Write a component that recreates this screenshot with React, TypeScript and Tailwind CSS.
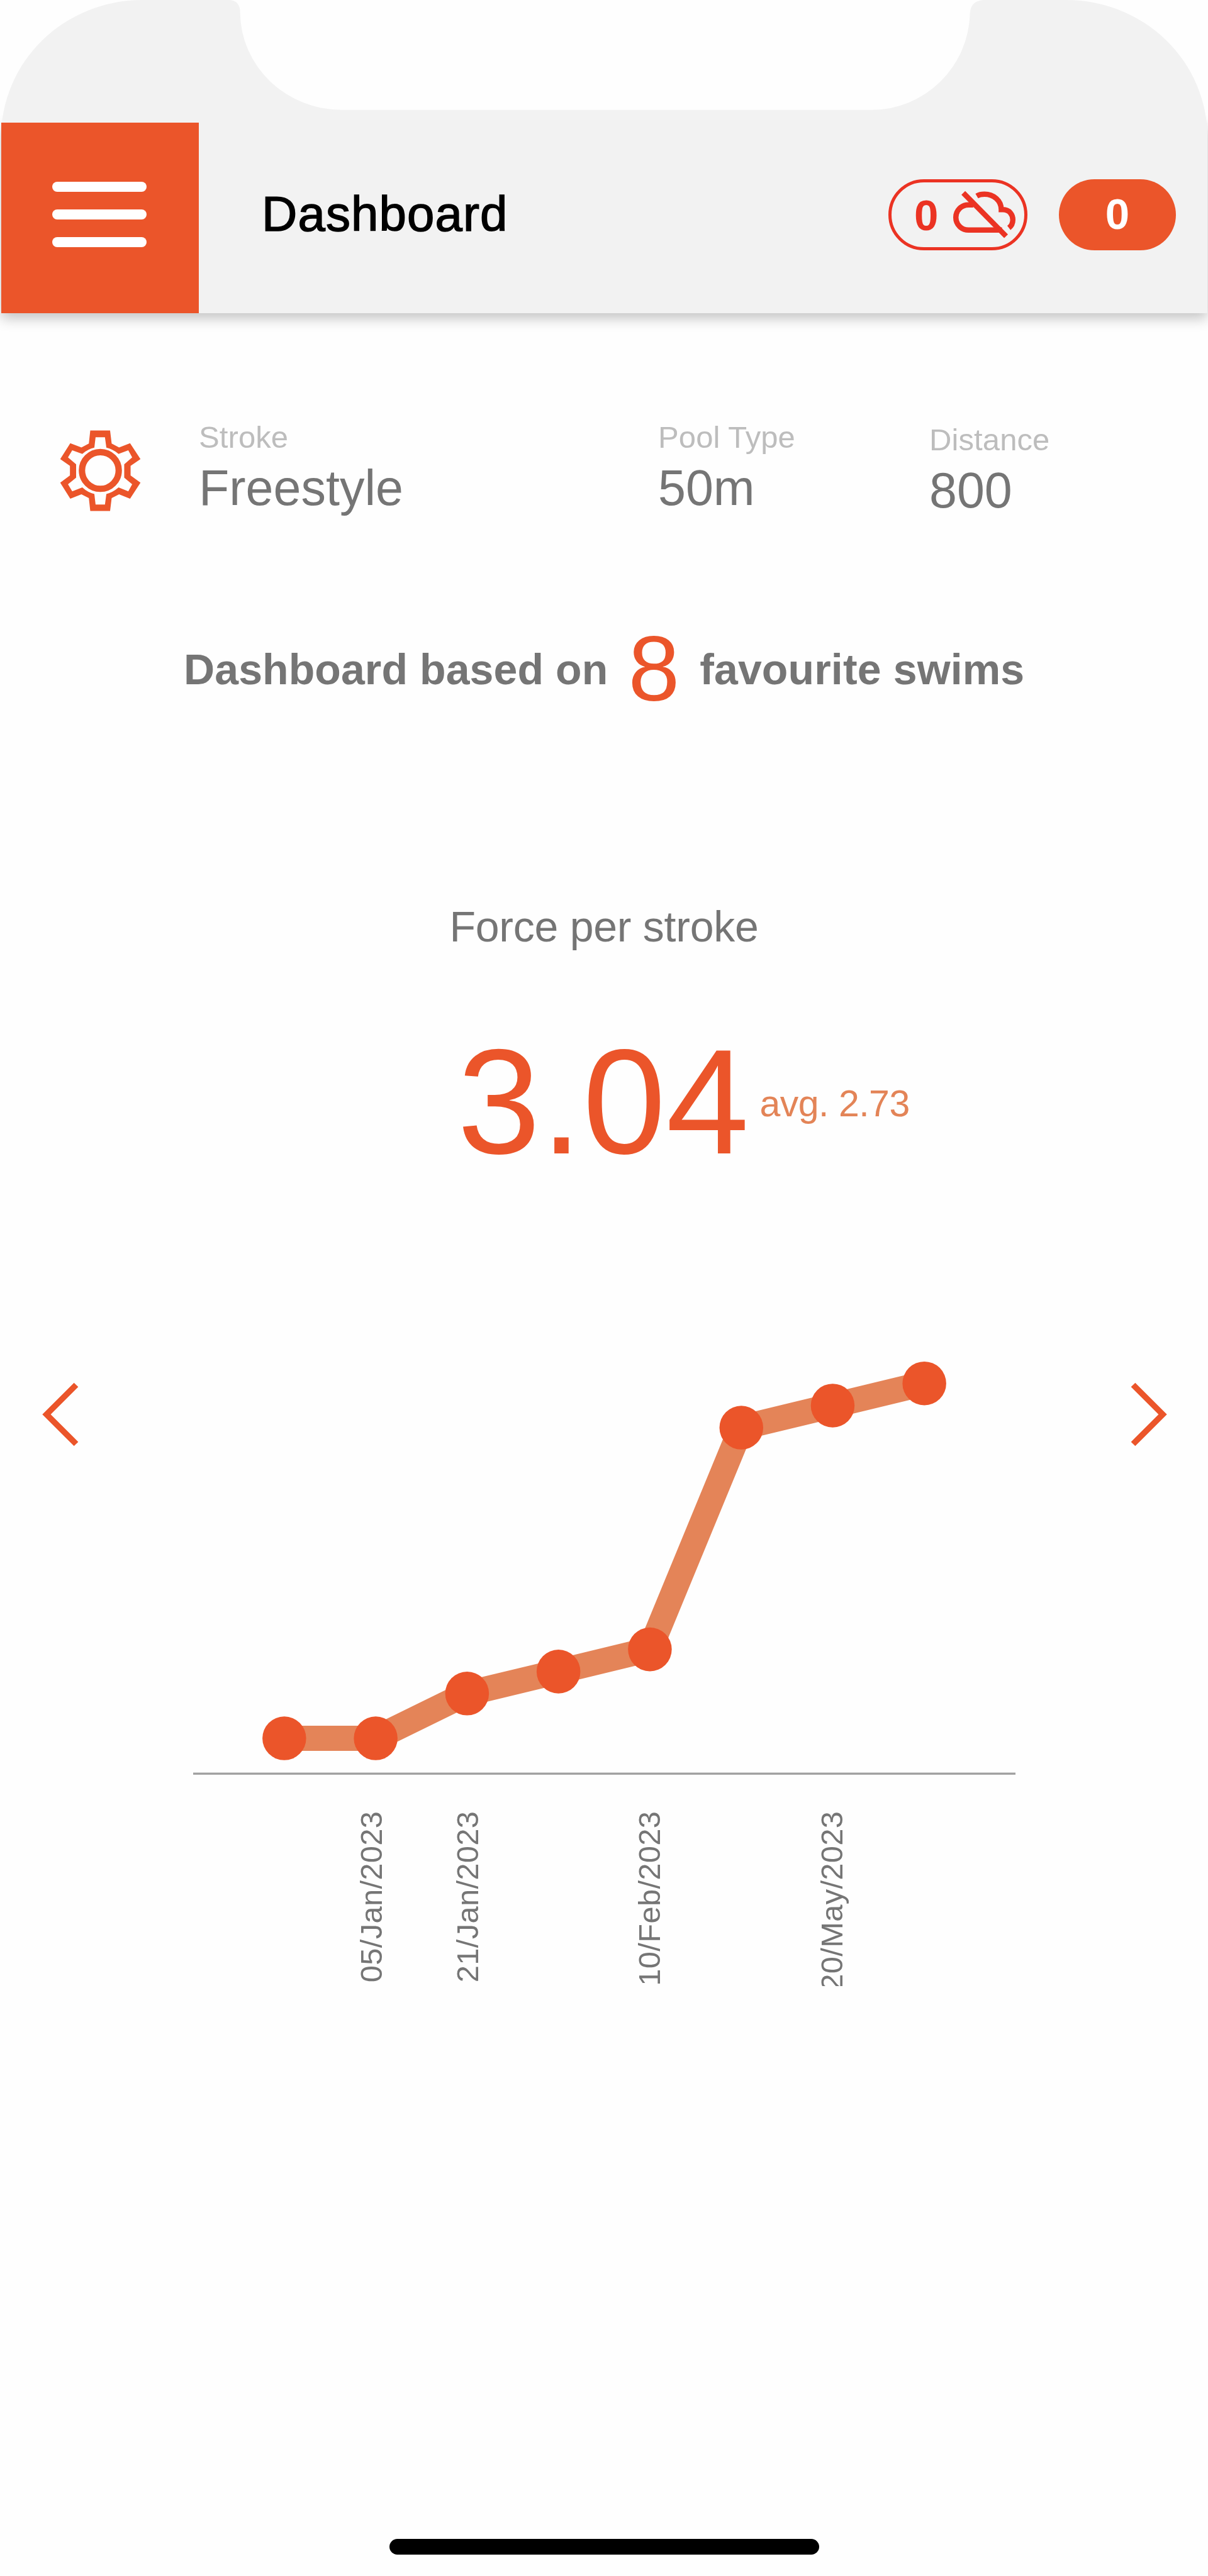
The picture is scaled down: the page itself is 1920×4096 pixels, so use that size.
import React from "react";

type SettingProps = {
  label: string;
  value: string;
  className?: string;
};

type Swim = {
  x: number;
  y: number;
};

type DateLabel = {
  x: number;
  text: string;
};

const swims: Swim[] = [
  { x: 536, y: 3280.6 },
  { x: 708.5, y: 3280.6 },
  { x: 881, y: 3196 },
  { x: 1053.5, y: 3154.6 },
  { x: 1226, y: 3112.7 },
  { x: 1398.6, y: 2694 },
  { x: 1571, y: 2652.4 },
  { x: 1744, y: 2610.5 },
];

const dateLabels: DateLabel[] = [
  { x: 720.5, text: "05/Jan/2023" },
  { x: 901.5, text: "21/Jan/2023" },
  { x: 1244.5, text: "10/Feb/2023" },
  { x: 1590, text: "20/May/2023" },
];

// Phone status area with the notch cut out
const StatusBar = () => (
  <svg viewBox="0 0 2279 232" className="block h-[195px] w-[1920px]" preserveAspectRatio="none">
    <path
      fill="#f2f2f2"
      d="M2 260 A266 260 0 0 1 268 0 H434 Q453 2 453 24 A192 186 0 0 0 645 208 H1644 A186 188 0 0 0 1830 25 Q1831 2 1855 0 H2012 A266 260 0 0 1 2278 260 Z"
    />
  </svg>
);

const CloudOffIcon = () => (
  <svg
    viewBox="410 115 365 280"
    className="h-[79px] w-[103px]"
    fill="none"
    stroke="currentColor"
    strokeWidth={30}
  >
    <path d="M474 132 L715 376" />
    <path d="M530 199 H503 A71 71 0 0 0 503 341 H692" />
    <path d="M550 149 C562 142 580 139 593 139 C645 139 688 175 688 226 H697 C735 226 753 255 753 283 C753 300 745 318 731 329" />
  </svg>
);

const GearIcon = () => (
  <svg viewBox="38 64 458 459" className="h-[129px] w-[129px]">
    <path
      fill="currentColor"
      fillRule="evenodd"
      d="M210 66 H322 L331 140 L373 162 L435 138 L494 228 L438 266 V320 L494 361 L435 452 L373 427 L331 448 L322 521 H210 L202 448 L160 427 L97 452 L40 361 L95 320 V266 L40 228 L97 138 L160 162 L202 140 Z M240 104 L233 163 Q195 172 165 198 L108 178 L84 218 L130 257 V333 L84 370 L108 410 L165 388 Q195 416 233 425 L240 485 H293 L301 425 Q338 416 370 388 L425 410 L447 370 L402 333 V257 L447 218 L425 178 L370 198 Q338 172 301 163 L293 104 Z"
    />
    <circle cx={267} cy={292} r={104} fill="none" stroke="currentColor" strokeWidth={36} />
  </svg>
);

const Header = () => (
  <header className="flex h-[303px] w-[1917px] bg-[#f2f2f2] shadow-[0_8px_20px_rgba(0,0,0,0.24)]">
    <button className="flex w-[314px] flex-col items-center justify-center gap-7 bg-[#eb552a] pr-[3px] pb-[12px]">
      <span className="h-4 w-[150px] rounded-full bg-white" />
      <span className="h-4 w-[150px] rounded-full bg-white" />
      <span className="h-4 w-[150px] rounded-full bg-white" />
    </button>

    <div className="flex flex-1 items-center pr-[50px] pb-[11px] pl-[100px]">
      <h1 className="pb-[3px] text-[78px] leading-none tracking-[1.1px] text-black [-webkit-text-stroke:1.5px_black]">
        Dashboard
      </h1>

      {/* Sync badges */}
      <div className="ml-auto flex gap-[50px] text-[69px] leading-none font-bold">
        <div className="flex h-[113px] w-[221px] items-center gap-[22px] rounded-full border-5 border-[#eb3323] pl-[36px] text-[#eb3323]">
          <span className="pt-[2px]">0</span>
          <CloudOffIcon />
        </div>
        <div className="flex h-[113px] w-[186px] items-center justify-center rounded-full bg-[#eb552a] pb-[1px] text-white">
          0
        </div>
      </div>
    </div>
  </header>
);

const Setting: React.FC<SettingProps> = ({ label, value, className }) => (
  <div className={className}>
    <div className="text-[49px] leading-none tracking-[0.1px] text-[#bdbdbd]">{label}</div>
    <div className="mt-[16px] text-[79px] leading-none">{value}</div>
  </div>
);

const ForceChart = () => (
  <svg viewBox="364 2565 1552 1183" className="ml-[182px] h-[997px] w-[1307px]">
    <polyline
      points={swims.map((s) => `${s.x},${s.y}`).join(" ")}
      fill="none"
      stroke="#e48458"
      strokeWidth={47.5}
    />
    {swims.map((s) => (
      <circle key={s.x} cx={s.x} cy={s.y} r={41.3} fill="#eb552a" />
    ))}

    {/* Axis */}
    <rect x={364} y={3345} width={1552} height={2} fill="#bbbbbb" />
    <rect x={364} y={3347} width={1552} height={2} fill="#858585" />

    {dateLabels.map((d) => (
      <text
        key={d.text}
        transform={`translate(${d.x} 3418) rotate(-90)`}
        textAnchor="end"
        fontSize={58}
        letterSpacing={0.4}
        fill="#757575"
      >
        {d.text}
      </text>
    ))}
  </svg>
);

const App = () => {
  return (
    <div className="h-[4096px] w-[1920px] overflow-hidden bg-[#fefefe] font-['Liberation_Sans',Arial,sans-serif] text-[#757575]">
      <StatusBar />
      <div className="pl-[2px]">
        <Header />
      </div>

      <main className="pt-[173px]">
        {/* Filter settings */}
        <section className="flex h-[318px] items-start pl-[95px]">
          <div className="mt-[13px] text-[#eb552a]">
            <GearIcon />
          </div>
          <Setting label="Stroke" value="Freestyle" className="ml-[92px] w-[730px]" />
          <Setting label="Pool Type" value="50m" className="w-[431px]" />
          <Setting label="Distance" value="800" className="pt-1" />
        </section>

        <p className="flex h-[147px] items-center gap-8 pl-[292px] text-[68px] leading-none font-bold whitespace-nowrap">
          <span className="pt-[3px] tracking-[0.1px]">Dashboard based on</span>
          <span className="pt-[2px] text-[147px] font-normal text-[#eb552a]">8</span>
          <span className="pt-[3px] tracking-[0.15px]">favourite swims</span>
        </p>

        <h2 className="mt-[303px] text-center text-[68px] leading-none tracking-[-0.25px]">
          Force per stroke
        </h2>

        <div className="mt-[123px] flex h-[240px] items-center pl-[727px] leading-none text-[#eb552a]">
          <span className="pt-[3px] text-[237px] tracking-[0.8px]">3.04</span>
          <span className="mt-[11px] ml-[16px] text-[59px] tracking-[-0.5px] text-[#e38457]">
            avg. 2.73
          </span>
        </div>

        {/* Chart carousel */}
        <section className="mt-[291px] flex items-start pl-[67px]">
          <button className="mt-[37px] text-[#eb552a]">
            <svg viewBox="0 0 58 102" className="h-[102px] w-[58px]" fill="none">
              <polyline points="54,4 7,51 54,98" stroke="currentColor" strokeWidth={9.5} />
            </svg>
          </button>
          <ForceChart />
          <button className="mt-[37px] ml-[183px] text-[#eb552a]">
            <svg viewBox="0 0 58 102" className="h-[102px] w-[58px]" fill="none">
              <polyline points="4,4 51,51 4,98" stroke="currentColor" strokeWidth={9.5} />
            </svg>
          </button>
        </section>
      </main>

      {/* Home indicator */}
      <div className="mx-auto mt-[879px] h-[25px] w-[683px] rounded-full bg-black" />
    </div>
  );
};

export default App;
